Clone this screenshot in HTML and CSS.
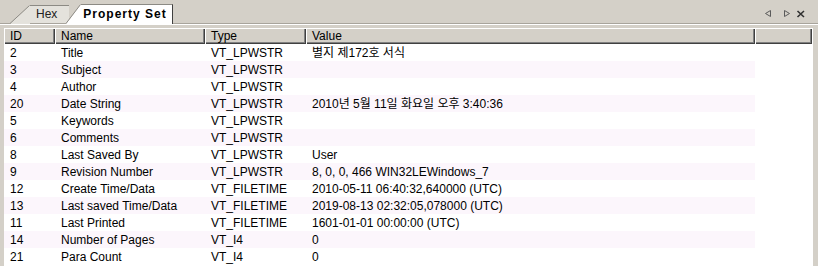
FILE: index.html
```html
<!DOCTYPE html>
<html lang="ko">
<head>
    <meta charset="UTF-8">
    <title>Property Set</title>
    <link rel="stylesheet" href="styles.css">
</head>
<body>
    <div class="painel">
        <div class="barra-abas">
            <div class="abas">
                <div class="aba">
                    <svg class="inclinado" width="20" height="19" viewBox="0 0 20 19">
                        <polygon points="0,19 20,0 20,19" fill="#e4e2dc"/>
                        <line x1="0" y1="18.5" x2="19.5" y2="0.5" stroke="#8c8a84"/>
                    </svg>
                    <span class="rotulo">Hex</span>
                </div>
                <div class="aba ativa">
                    <svg class="inclinado" width="15" height="20" viewBox="0 0 15 20">
                        <polygon points="0,20 15,0 15,20" fill="#fff"/>
                        <line x1="0" y1="19.5" x2="14.5" y2="0.5" stroke="#8c8a84"/>
                    </svg>
                    <span class="rotulo">Property Set</span>
                </div>
            </div>
            <div class="ferramentas">
                <svg width="41" height="8" viewBox="0 0 41 8">
                    <polygon points="5.5,0.5 0.5,3.5 5.5,6.5" fill="none" stroke="#5a5a5a"/>
                    <polygon points="19.5,0.5 24.5,3.5 19.5,6.5" fill="none" stroke="#5a5a5a"/>
                    <path d="M32.5 1 L39 7 M39 1 L32.5 7" stroke="#303030" stroke-width="1.6"/>
                </svg>
            </div>
        </div>
        <div class="lista">
            <table class="propriedades">
                <colgroup>
                    <col class="col-id">
                    <col class="col-nome">
                    <col class="col-tipo">
                    <col class="col-valor">
                    <col class="col-resto">
                </colgroup>
                <thead>
                    <tr><th>ID</th><th>Name</th><th>Type</th><th>Value</th><th></th></tr>
                </thead>
                <tbody>
                    <tr><td>2</td><td>Title</td><td>VT_LPWSTR</td><td>별지 제172호 서식</td></tr>
                    <tr><td>3</td><td>Subject</td><td>VT_LPWSTR</td><td></td></tr>
                    <tr><td>4</td><td>Author</td><td>VT_LPWSTR</td><td></td></tr>
                    <tr><td>20</td><td>Date String</td><td>VT_LPWSTR</td><td>2010년 5월 11일 화요일 오후 3:40:36</td></tr>
                    <tr><td>5</td><td>Keywords</td><td>VT_LPWSTR</td><td></td></tr>
                    <tr><td>6</td><td>Comments</td><td>VT_LPWSTR</td><td></td></tr>
                    <tr><td>8</td><td>Last Saved By</td><td>VT_LPWSTR</td><td>User</td></tr>
                    <tr><td>9</td><td>Revision Number</td><td>VT_LPWSTR</td><td>8, 0, 0, 466 WIN32LEWindows_7</td></tr>
                    <tr><td>12</td><td>Create Time/Data</td><td>VT_FILETIME</td><td>2010-05-11 06:40:32,640000 (UTC)</td></tr>
                    <tr><td>13</td><td>Last saved Time/Data</td><td>VT_FILETIME</td><td>2019-08-13 02:32:05,078000 (UTC)</td></tr>
                    <tr><td>11</td><td>Last Printed</td><td>VT_FILETIME</td><td>1601-01-01 00:00:00 (UTC)</td></tr>
                    <tr><td>14</td><td>Number of Pages</td><td>VT_I4</td><td>0</td></tr>
                    <tr><td>21</td><td>Para Count</td><td>VT_I4</td><td>0</td></tr>
                </tbody>
            </table>
        </div>
    </div>
</body>
</html>
```

FILE: styles.css
```css
body {
    margin: 0;
    background-color: #d4d0c8;
    font-family: "Liberation Sans", Arial, "Noto Sans CJK KR", sans-serif;
    font-size: 12px;
    color: #000;
}
.painel {
    width: 818px;
    height: 266px;
    overflow: hidden;
}
.barra-abas {
    display: flex;
    height: 24px;
    border-bottom: 1px solid #fff;
    box-shadow: inset 0 -1px #a8a49c;
}
.abas {
    display: flex;
    align-items: flex-end;
    padding-left: 10px;
}
.aba {
    display: flex;
    align-items: flex-end;
}
.aba .rotulo {
    height: 17px;
    line-height: 17px;
    padding: 0 12px 0 6px;
    background-color: #e4e2dc;
    border-top: 1px solid #8c8a84;
    border-bottom: 1px solid #a8a49c;
    color: #222;
}
.aba.ativa {
    position: relative;
    margin-left: -3px;
}
.aba.ativa .rotulo {
    height: 19px;
    line-height: 19px;
    padding: 0 5px 0 2px;
    background-color: #fff;
    border-bottom: none;
    border-right: 1px solid #404040;
    font-weight: bold;
    letter-spacing: 1px;
    color: #000;
}
.inclinado {
    display: block;
}
.ferramentas {
    margin-left: auto;
    padding: 10px 12px 0 0;
}
.ferramentas svg {
    display: block;
}
.lista {
    margin: 3px 0 0 4px;
    width: 809px;
    height: 238px;
    background-color: #fff;
}
.propriedades {
    border-collapse: collapse;
    table-layout: fixed;
    width: 808px;
}
.col-id { width: 51px; }
.col-nome { width: 150px; }
.col-tipo { width: 101px; }
.col-valor { width: 449px; }
.col-resto { width: 57px; }
.propriedades th {
    height: 16px;
    line-height: 16px;
    padding: 0 0 0 6px;
    text-align: left;
    font-weight: normal;
    background-color: #d4d0c8;
    box-shadow: inset 1px 1px #fff, inset -1px -1px #404040, inset -2px -2px #808080;
}
.propriedades td {
    height: 16px;
    line-height: 16px;
    padding: 1px 0 0 6px;
    white-space: nowrap;
    overflow: hidden;
}
.propriedades tbody tr:nth-child(even) td {
    background-color: #fcf6fc;
}
```
